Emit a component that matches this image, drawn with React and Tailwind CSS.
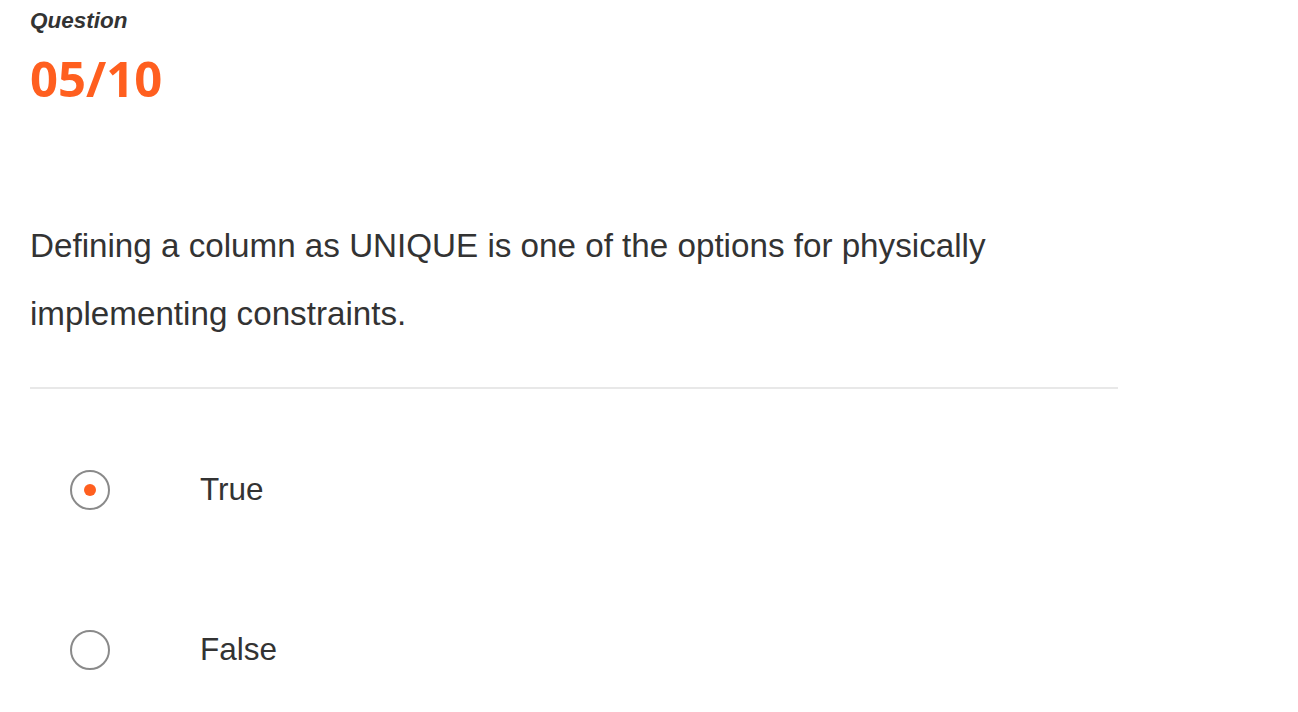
import React, { useState } from 'react';

const OPTIONS = ['True', 'False'];

export default function App() {
  const [picked, setPicked] = useState('True');

  return (
    <div className="min-h-screen bg-white pl-[30px] pt-2 text-[#333]" style={{ fontFamily: "'Liberation Sans', Arial, sans-serif" }}>
      <div className="w-[1088px]">
        <p className="text-[22.5px] leading-[26px] font-bold italic">Question</p>
        <h1 className="mt-[16px] text-[49px] leading-[56px] font-bold text-[#ff5f1f]" style={{ fontFamily: "'Open Sans', sans-serif" }}>
          05/10
        </h1>

        <p className="mt-[106px] text-[33.2px] leading-[68px]">
          Defining a column as UNIQUE is one of the options for physically implementing constraints.
        </p>

        <div className="mt-[39px] h-[2px] bg-[#e8e8e8]" />

        <div className="mt-[61px] flex flex-col gap-[80px]">
          {OPTIONS.map((opt) => (
            <label key={opt} className="flex h-[80px] items-center cursor-pointer">
              <span
                onClick={() => setPicked(opt)}
                className="ml-[40px] flex h-[40px] w-[40px] items-center justify-center rounded-full border-2 border-[#8a8a8a]"
              >
                {picked === opt && <span className="h-[12px] w-[12px] rounded-full bg-[#ff5f1f]" />}
              </span>
              <span className="ml-[90px] text-[31.5px]">{opt}</span>
            </label>
          ))}
        </div>
      </div>
    </div>
  );
}
